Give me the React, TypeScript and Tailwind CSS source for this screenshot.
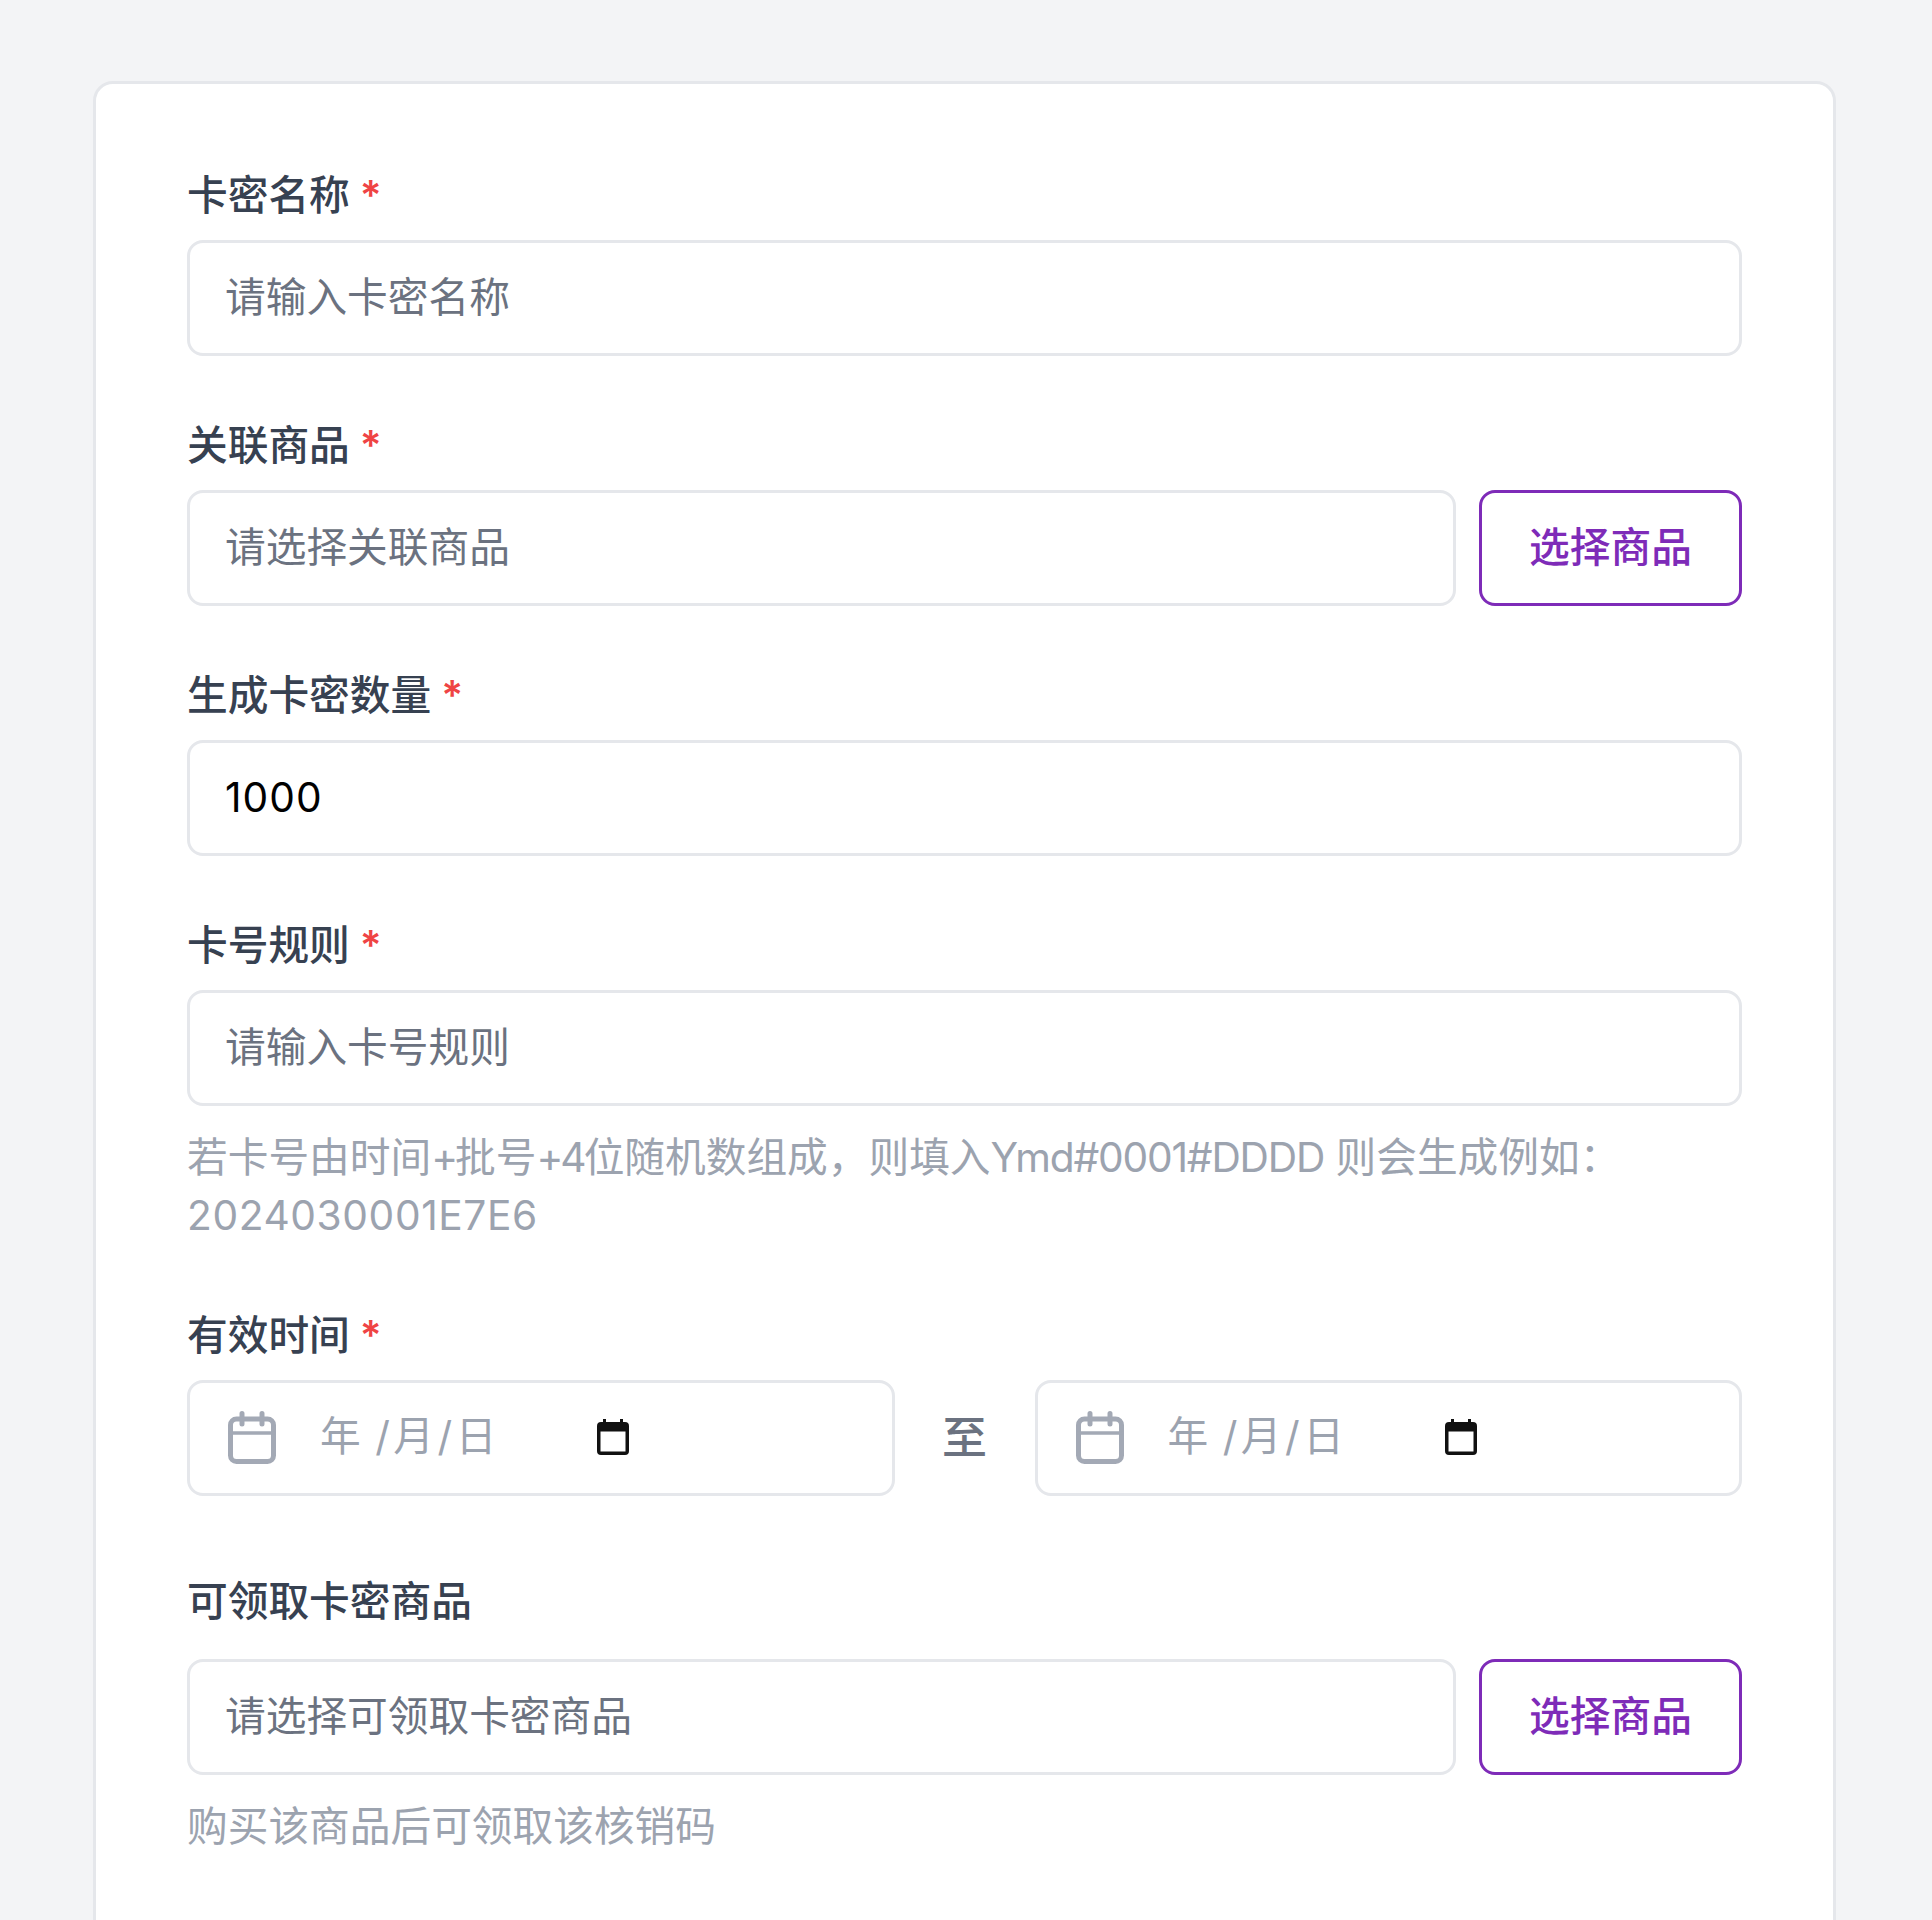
import React from 'react';

interface FieldLabelProps {
  text: string;
  required?: boolean;
}

const FieldLabel: React.FC<FieldLabelProps> = ({ text, required }) => (
  <label className="block h-[60px] text-[40.7px] leading-[62px] font-medium text-[#374151]">
    {text}
    {required && <span className="ml-[10px] font-semibold text-[#ef4444]">*</span>}
  </label>
);

const inputClass =
  "h-[116px] w-full min-w-0 rounded-[16px] border-[3px] border-[#e5e7eb] bg-white px-[35px] pb-[2px] text-[40.7px] text-black outline-none placeholder:text-[#6b7280]";

const SelectButton = () => (
  <button
    type="button"
    className="h-[116px] w-[263px] shrink-0 rounded-[16px] border-[3px] border-[#7e2bb8] bg-white text-[40.7px] font-medium text-[#7e2bb8]"
  >
    选择商品
  </button>
);

const Calendar = () => (
  <svg viewBox="0 0 48 53" className="h-[53px] w-[48px] shrink-0" fill="none" stroke="#a3a9b5" strokeWidth="5" strokeLinecap="round">
    <rect x="2.5" y="8" width="43" height="42.5" rx="6" />
    <path d="M2.5 22H45.5" strokeWidth="3.5" />
    <path d="M14 2.5V13M34 2.5V13" />
  </svg>
);

const PickerIndicator = () => (
  <svg viewBox="0 0 32 36" className="h-[36px] w-[32px] shrink-0">
    <path
      fill="#111"
      fillRule="evenodd"
      d="M6 0h3v3h14V0h3v3h2a4 4 0 0 1 4 4v25a4 4 0 0 1-4 4H4a4 4 0 0 1-4-4V7a4 4 0 0 1 4-4h2V0ZM3.500 12.500V32.500h25V12.500Z"
    />
  </svg>
);

const DateField = () => (
  <div className="flex h-[116px] min-w-0 flex-1 items-center rounded-[16px] border-[3px] border-[#e5e7eb] bg-white pb-[2px] pl-[38px]">
    <Calendar />
    <span className="ml-[44px] w-[179px] text-[40.7px] tracking-[3.5px] whitespace-nowrap text-[#9ca3af] [word-spacing:-4px]">年 /月/日</span>
    <span className="ml-[98px]">
      <PickerIndicator />
    </span>
  </div>
);

const Hint: React.FC<{ children: React.ReactNode }> = ({ children }) => (
  <p className="mt-[23px] text-[40.7px] leading-[58px] text-[#9ca3af]">{children}</p>
);

export default function App() {
  return (
    <div className="h-[1920px] overflow-hidden bg-[#f3f4f6] pt-[81px] pl-[93px] font-['Inter','Noto_Sans_CJK_SC',sans-serif]">
      <div className="min-h-[1900px] w-[1743px] rounded-[20px] border-[3px] border-[#e5e7eb] bg-white px-[91px] pt-[81px]">
        <FieldLabel text="卡密名称" required />
        <input className={`${inputClass} mt-[15px]`} placeholder="请输入卡密名称" />

        <div className="mt-[59px]">
          <FieldLabel text="关联商品" required />
          <div className="mt-[15px] flex gap-[23px]">
            <input className={inputClass} placeholder="请选择关联商品" />
            <SelectButton />
          </div>
        </div>

        <div className="mt-[59px]">
          <FieldLabel text="生成卡密数量" required />
          <input className={`${inputClass} mt-[15px] tracking-[1px]`} defaultValue="1000" />
        </div>

        <div className="mt-[59px]">
          <FieldLabel text="卡号规则" required />
          <input className={`${inputClass} mt-[15px]`} placeholder="请输入卡号规则" />
          <Hint>
            若卡号由时间<span className="tracking-[-3px]">+</span>批号<span className="tracking-[-3px]">+4</span>
            位随机数组成，则填入<span className="tracking-[-1.2px]">Ymd#0001#DDDD</span> 则会生成例如：
            <span className="tracking-[0.6px]">2024030001E7E6</span>
          </Hint>
        </div>

        <div className="mt-[60px]">
          <FieldLabel text="有效时间" required />
          <div className="mt-[15px] flex items-center">
            <DateField />
            <span className="w-[140px] text-center text-[45px] font-medium text-[#6b7280]">至</span>
            <DateField />
          </div>
        </div>

        <div className="mt-[75px]">
          <FieldLabel text="可领取卡密商品" />
          <div className="mt-[28px] flex gap-[23px]">
            <input className={inputClass} placeholder="请选择可领取卡密商品" />
            <SelectButton />
          </div>
          <Hint>购买该商品后可领取该核销码</Hint>
        </div>
      </div>
    </div>
  );
}
